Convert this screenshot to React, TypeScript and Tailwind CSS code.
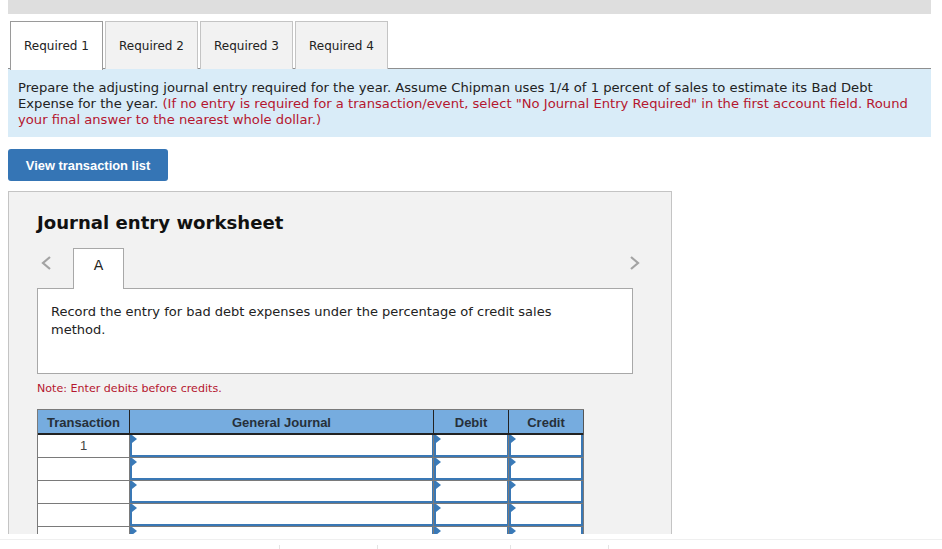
const tabs = ["Required 1", "Required 2", "Required 3", "Required 4"];
const rows = ["1", "", "", "", ""];

function Tri() {
  return (
    <svg className="absolute left-0 top-0" width="5" height="8" viewBox="0 0 5 8">
      <path d="M0 0 L5 4 L0 8 Z" fill="#3a7ab8" />
    </svg>
  );
}

function InputCell({ last }: { last?: boolean }) {
  return (
    <div className="border-r border-b border-[#7a7a7a] h-[23px]">
      <div className={`relative h-[22px] bg-white border-l-2 border-b-2 border-[#3a78b5] ${last ? "border-r-2" : "border-r"}`}>
        <Tri />
      </div>
    </div>
  );
}

export default function App() {
  return (
    <div className="w-[942px] h-[549px] overflow-hidden bg-white font-['DejaVu_Sans',Verdana,sans-serif] text-[#222]">
      <div className="h-[534px] overflow-hidden px-2 w-[939px]">
        <div className="h-[14px] bg-[#dedede]" />
        <div className="mt-[7px] h-[48px] flex gap-[2px] pl-[2px] border-b border-[#8f8f8f]">
          {tabs.map((t, i) => (
            <div
              key={t}
              className={`w-[93px] h-[48px] flex items-center justify-center text-[12px] border border-b-0 ${
                i === 0 ? "bg-white border-[#9a9a9a] h-[49px] relative z-10" : "bg-[#f2f2f2] border-[#c4c4c4]"
              }`}
            >
              {t}
            </div>
          ))}
        </div>
        <div className="h-[68px] bg-[#d9ecf8] pl-[10px] pr-2 pt-[10px] text-[13.15px] leading-4 text-[#222]">
          <p className="relative top-[0.5px]">
            Prepare the adjusting journal entry required for the year. Assume Chipman uses 1/4 of 1 percent of sales to estimate its Bad Debt Expense for the year.{" "}
            <span className="text-[#b5162f]">
              (If no entry is required for a transaction/event, select "No Journal Entry Required" in the first account field. Round your final answer to the nearest whole dollar.)
            </span>
          </p>
        </div>
        <button className="mt-3 block w-40 h-8 rounded-[3px] bg-[#3575b5] text-white text-[12.9px] font-bold font-['Liberation_Sans',Arial,sans-serif] pt-px">
          View transaction list
        </button>
        <div className="mt-[10px] w-[664px] h-[400px] bg-[#f2f2f2] border border-[#c4c4c4] pl-7 pr-[38px] pt-[19px]">
          <h2 className="text-[18.1px] leading-6 font-bold text-[#111]">Journal entry worksheet</h2>
          <div className="mt-[13px] relative flex">
            <svg className="absolute left-[3px] top-[7px]" width="12" height="16" viewBox="0 0 12 16" fill="none">
              <path d="M10 2 L3 8 L10 14" stroke="#a3a3a3" strokeWidth="2.2" />
            </svg>
            <svg className="absolute right-[-8px] top-[7px]" width="12" height="16" viewBox="0 0 12 16" fill="none">
              <path d="M2 2 L9 8 L2 14" stroke="#a3a3a3" strokeWidth="2.2" />
            </svg>
            <div className="ml-9 w-[51px] h-[41px] bg-white border border-b-0 border-[#a8a8a8] relative z-10 flex items-start justify-center pt-[6px] text-[14px] font-normal">
              A
            </div>
          </div>
          <div className="h-[86px] -mt-px bg-white border border-[#a8a8a8] pl-[13px] pr-[60px] pt-[14px] text-[13.03px] leading-[18px]">
            Record the entry for bad debt expenses under the percentage of credit sales method.
          </div>
          <p className="mt-[7px] text-[11.1px] leading-4 text-[#b5162f]">Note: Enter debits before credits.</p>
          <div className="mt-3 w-[547px] font-['Liberation_Sans',Arial,sans-serif]">
            <div className="grid grid-cols-[93px_304px_75px_75px] h-[26px] bg-[#76acdf] border-t border-[#7a7a7a] border-b-2 border-b-[#222] text-[13px] font-bold text-[#26303a] text-center leading-[25px]">
              <div className="border-l border-[#7a7a7a] border-r border-r-[#222]">Transaction</div>
              <div className="border-r border-[#222]">General Journal</div>
              <div className="border-r border-[#222]">Debit</div>
              <div className="border-r border-[#555]">Credit</div>
            </div>
            {rows.map((r, i) => (
              <div key={i} className="grid grid-cols-[93px_304px_75px_75px]">
                <div className="h-[23px] bg-white border-l border-r border-b border-[#7a7a7a] text-center text-[13px] leading-[22px] text-[#444]">{r}</div>
                <InputCell />
                <InputCell />
                <InputCell last />
              </div>
            ))}
          </div>
        </div>
      </div>
      <div className="mt-[5px] h-[10px] border-t border-[#efefef] relative">
        <div className="absolute left-[279px] top-[5px] h-[5px] w-px bg-[#e4e4e4]" />
        <div className="absolute left-[377px] top-[5px] h-[5px] w-px bg-[#e4e4e4]" />
        <div className="absolute left-[510px] top-[5px] h-[5px] w-px bg-[#e4e4e4]" />
        <div className="absolute left-[608px] top-[5px] h-[5px] w-px bg-[#e4e4e4]" />
      </div>
    </div>
  );
}
